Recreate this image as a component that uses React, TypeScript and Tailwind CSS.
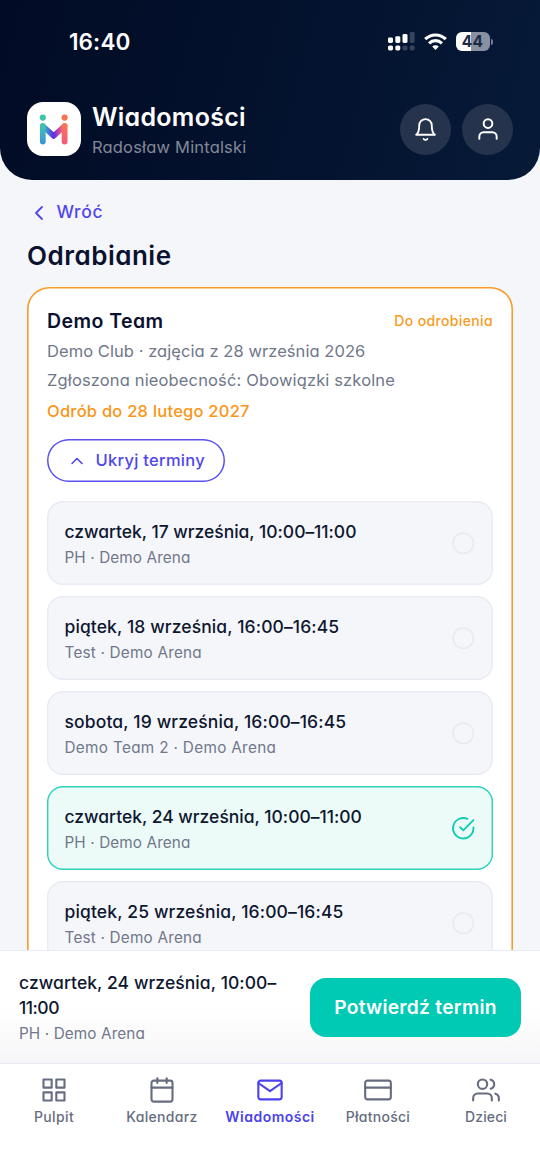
import type { ReactNode } from "react";
import {
  FiBell,
  FiCalendar,
  FiCheckCircle,
  FiChevronLeft,
  FiChevronUp,
  FiCircle,
  FiCreditCard,
  FiGrid,
  FiMail,
  FiUser,
  FiUsers,
} from "react-icons/fi";

type Slot = {
  date: string;
  dateClass: string;
  place: string;
  placeClass: string;
  selected?: boolean;
};

const slots: Slot[] = [
  {
    date: "czwartek, 17 września, 10:00–11:00",
    dateClass: "tracking-[-0.03px]",
    place: "PH · Demo Arena",
    placeClass: "tracking-[0.1px]",
  },
  {
    date: "piątek, 18 września, 16:00–16:45",
    dateClass: "tracking-[0.1px]",
    place: "Test · Demo Arena",
    placeClass: "tracking-[0.2px]",
  },
  {
    date: "sobota, 19 września, 16:00–16:45",
    dateClass: "tracking-[0.13px]",
    place: "Demo Team 2 · Demo Arena",
    placeClass: "tracking-[0.32px]",
  },
  {
    date: "czwartek, 24 września, 10:00–11:00",
    dateClass: "tracking-[-0.01px]",
    place: "PH · Demo Arena",
    placeClass: "tracking-[0.1px]",
    selected: true,
  },
  {
    date: "piątek, 25 września, 16:00–16:45",
    dateClass: "tracking-[0.13px]",
    place: "Test · Demo Arena",
    placeClass: "tracking-[0.2px]",
  },
];

function StatusBar() {
  return (
    <div className="flex h-[83px] shrink-0 items-center justify-between pl-[69px] pr-[47.5px]">
      <span className="text-[22.5px] font-semibold leading-[28px] tracking-[0.1px]">16:40</span>
      <div className="flex items-center gap-[9px]">
        <svg width="27" height="19" viewBox="0 0 27 19" fill="#fff">
          <rect x="0" y="5.6" width="5" height="5.4" rx="1.4" />
          <rect x="7.3" y="4.2" width="5" height="6.8" rx="1.4" />
          <rect x="14.5" y="2" width="5" height="9" rx="1.4" />
          <rect x="21.7" y="0" width="5" height="11" rx="1.4" opacity=".2" />
          <rect x="0" y="13.4" width="5" height="5" rx="1.6" />
          <rect x="7.3" y="13.4" width="5" height="5" rx="1.6" />
          <rect x="14.5" y="13.4" width="5" height="5" rx="1.6" opacity=".2" />
          <rect x="21.7" y="13.4" width="5" height="5" rx="1.6" opacity=".2" />
        </svg>
        <svg width="23" height="18" viewBox="0 0 23 18" fill="none" stroke="#fff" strokeWidth="3.1">
          <path d="M1.2 6.2a14.6 14.6 0 0 1 20.6 0" />
          <path d="M5.1 10.3a9.1 9.1 0 0 1 12.8 0" />
          <path
            d="M8.2 13.6a4.7 4.7 0 0 1 6.6 0L11.5 17z"
            fill="#fff"
            stroke="none"
          />
        </svg>
        <div className="flex items-center gap-px">
          <div className="flex h-[19px] w-[34px] items-center justify-center rounded-[6px] bg-[linear-gradient(90deg,#fff_44%,#8990a1_44%)] text-[15.5px] font-bold leading-[19px] tracking-[0.2px] text-[#1c2a45]">
            44
          </div>
          <div className="h-[6px] w-[2px] rounded-r-full bg-[#737c90]" />
        </div>
      </div>
    </div>
  );
}

function Logo() {
  return (
    <div className="size-[54px] shrink-0 rounded-[16px] bg-white">
      <svg width="54" height="54" viewBox="0 0 54 54" fill="none">
        <defs>
          <linearGradient id="left" x1="0" y1="20" x2="0" y2="43" gradientUnits="userSpaceOnUse">
            <stop stopColor="#48c8a6" />
            <stop offset="1" stopColor="#3b93d4" />
          </linearGradient>
          <linearGradient id="right" x1="0" y1="20" x2="0" y2="43" gradientUnits="userSpaceOnUse">
            <stop stopColor="#f97a50" />
            <stop offset="1" stopColor="#f0587e" />
          </linearGradient>
          <linearGradient id="middle" x1="15" y1="0" x2="38" y2="0" gradientUnits="userSpaceOnUse">
            <stop stopColor="#45bfae" />
            <stop offset=".22" stopColor="#3f8fd0" />
            <stop offset=".5" stopColor="#5b2be6" />
            <stop offset=".78" stopColor="#dd4f96" />
            <stop offset="1" stopColor="#f8745a" />
          </linearGradient>
        </defs>
        <circle cx="15.8" cy="15.6" r="3.1" fill="#42c3ac" />
        <circle cx="37.6" cy="15.6" r="3.1" fill="#f8744e" />
        <path
          d="M15.8 24l10.9 10 10.9-10"
          stroke="url(#middle)"
          strokeWidth="5.6"
          strokeLinecap="round"
          strokeLinejoin="round"
        />
        <path d="M15.8 23.9V39.5" stroke="url(#left)" strokeWidth="5.8" strokeLinecap="round" />
        <path d="M37.6 23.9V39.5" stroke="url(#right)" strokeWidth="5.8" strokeLinecap="round" />
      </svg>
    </div>
  );
}

function RoundButton({ children }: { children: ReactNode }) {
  return (
    <button className="flex size-[51px] items-center justify-center rounded-full bg-[#25334d]">
      {children}
    </button>
  );
}

function Header() {
  return (
    <header className="flex h-[180px] shrink-0 flex-col rounded-b-[32px] bg-[linear-gradient(105deg,#020b25_0%,#03112c_45%,#061a38_100%)] text-white">
      <StatusBar />
      <div className="flex h-[54px] items-center px-[27px] mt-[19px]">
        <Logo />
        <div className="ml-[11px] flex flex-1 flex-col pt-[3px]">
          <h1 className="text-[25px] font-semibold leading-[30px] tracking-[0.28px]">Wiadomości</h1>
          <p className="mt-[2px] text-[16.5px] leading-[26px] tracking-[0.18px] text-[#828898]">
            Radosław Mintalski
          </p>
        </div>
        <div className="flex gap-[11px]">
          <RoundButton>
            <FiBell size={25} strokeWidth={1.8} />
          </RoundButton>
          <RoundButton>
            <FiUser size={26} strokeWidth={1.8} />
          </RoundButton>
        </div>
      </div>
    </header>
  );
}

function SlotRow({ slot }: { slot: Slot }) {
  const frame = slot.selected
    ? "bg-[#ecfbf8] ring-[#2fd0bd]"
    : "bg-[#f5f6fa] ring-[#e9ebf4]";
  return (
    <li
      className={`flex h-[84px] items-center justify-between rounded-[16px] px-[17.5px] pt-px ring-[1.4px] ring-inset ${frame}`}
    >
      <div className="whitespace-nowrap pt-[2px]">
        <p className={`text-[17.5px] font-medium leading-[26px] text-[#0e1730] ${slot.dateClass}`}>
          {slot.date}
        </p>
        <p className={`mt-px text-[15.3px] leading-[24px] text-[#70778a] ${slot.placeClass}`}>
          {slot.place}
        </p>
      </div>
      {slot.selected ? (
        <FiCheckCircle size={24.5} strokeWidth={1.8} className="text-[#0fcbb6]" />
      ) : (
        <FiCircle size={24.5} strokeWidth={1.6} className="text-[#e7eaf4]" />
      )}
    </li>
  );
}

function MakeUpCard() {
  return (
    <section className="mt-[15.5px] h-[760px] rounded-[22px] bg-white px-5 pt-[20px] ring-[1.6px] ring-inset ring-[#f99c27]">
      <div className="flex items-center justify-between">
        <h3 className="text-[19.5px] font-semibold leading-[28px] tracking-[0.45px] text-[#0a1230]">
          Demo Team
        </h3>
        <span className="text-[14px] font-medium leading-[28px] tracking-[0.36px] text-[#f99a20]">
          Do odrobienia
        </span>
      </div>
      <div className="mt-[2px] whitespace-nowrap text-[16.5px] leading-[28px] text-[#70778a]">
        <p className="tracking-[0.06px]">Demo Club · zajęcia z 28 września 2026</p>
        <p className="mt-[0.6px] tracking-[0.14px]">Zgłoszona nieobecność: Obowiązki szkolne</p>
        <p className="mt-[3px] font-medium tracking-[0.24px] text-[#fa9616]">
          Odrób do 28 lutego 2027
        </p>
      </div>
      <button className="mt-[14px] flex h-[43px] items-center gap-[8.5px] rounded-full pl-5 pr-5 pt-px text-[16.5px] font-medium tracking-[0.28px] text-[#4f46ee] ring-[1.5px] ring-inset ring-[#5a52ee]">
        <FiChevronUp size={20} strokeWidth={1.9} />
        Ukryj terminy
      </button>
      <ul className="mt-[19px] flex flex-col gap-[11px]">
        {slots.map((slot) => (
          <SlotRow key={slot.date} slot={slot} />
        ))}
      </ul>
    </section>
  );
}

function ConfirmBar() {
  return (
    <div className="flex h-[113px] shrink-0 items-center justify-between border-t border-[#e7eaf4] bg-[linear-gradient(180deg,#fff_50%,#f6f6f8_100%)] pl-[19px] pr-[19px]">
      <div className="w-[270px] pt-[2px]">
        <p className="text-[17.5px] font-medium leading-[24.5px] text-[#0e1730]">
          <span className="block whitespace-nowrap tracking-[0.07px]">
            czwartek, 24 września, 10:00–
          </span>
          <span className="block tracking-[-0.5px]">11:00</span>
        </p>
        <p className="mt-[3px] text-[15.3px] leading-[22px] tracking-[0.1px] text-[#70778a]">
          PH · Demo Arena
        </p>
      </div>
      <button className="flex h-[59px] w-[211px] items-center justify-center rounded-[16px] bg-[#00c9b4] pt-px text-[19.2px] font-semibold tracking-[0.28px] text-white">
        Potwierdź termin
      </button>
    </div>
  );
}

const tabs = [
  { label: "Pulpit", Icon: FiGrid, style: "font-medium tracking-[0.38px] text-[#666d80]" },
  { label: "Kalendarz", Icon: FiCalendar, style: "font-medium tracking-[0.32px] text-[#666d80]" },
  { label: "Wiadomości", Icon: FiMail, style: "font-semibold tracking-[0.48px] text-[#4b42ee]" },
  { label: "Płatności", Icon: FiCreditCard, style: "font-medium tracking-[0.26px] text-[#666d80]" },
  { label: "Dzieci", Icon: FiUsers, style: "font-medium tracking-[0.1px] text-[#666d80]" },
];

function TabBar() {
  return (
    <nav className="grid h-[107px] shrink-0 grid-cols-5 border-t border-[#e7eaf4] bg-white pt-[11.5px]">
      {tabs.map(({ label, Icon, style }) => (
        <a key={label} className={`flex flex-col items-center text-[14px] leading-[18px] ${style}`}>
          <Icon size={28} strokeWidth={1.8} />
          <span className="mt-[4.5px]">{label}</span>
        </a>
      ))}
    </nav>
  );
}

export default function App() {
  return (
    <div className="flex h-[1170px] w-[540px] flex-col overflow-hidden bg-[#f5f6fa] font-['Inter',sans-serif] [font-feature-settings:'cv11']">
      <Header />
      <main className="min-h-0 flex-1 overflow-hidden px-[27px] pt-[20px]">
        <a className="flex h-[25px] items-center gap-[5.5px] text-[17.5px] font-medium tracking-[0.65px] text-[#4f46ee]">
          <FiChevronLeft size={24} strokeWidth={1.8} />
          Wróć
        </a>
        <h2 className="mt-[14.5px] text-[26px] font-semibold leading-[32px] tracking-[0.5px] text-[#0a1230]">
          Odrabianie
        </h2>
        <MakeUpCard />
      </main>
      <ConfirmBar />
      <TabBar />
    </div>
  );
}
